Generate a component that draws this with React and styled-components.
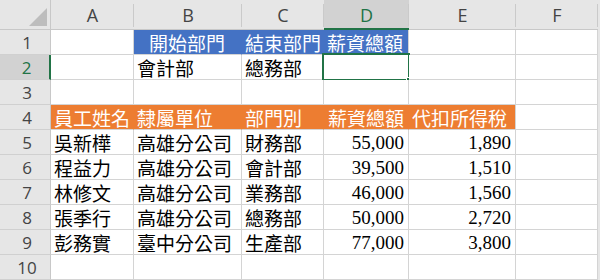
import React from 'react';
import styled, { createGlobalStyle } from 'styled-components';

const GREEN = '#217346';
const GRID = '#d4d4d4';

const GlobalStyle = createGlobalStyle`
  html, body {
    margin: 0;
    padding: 0;
    background: #ffffff;
    overflow: hidden;
  }
`;

const columns = ['A', 'B', 'C', 'D', 'E', 'F'];

const rows = [
  [null, { t: '開始部門', fill: '#4472c4', align: 'center' }, { t: '結束部門', fill: '#4472c4' }, { t: '薪資總額', fill: '#4472c4' }, null, null],
  [null, { t: '會計部' }, { t: '總務部' }, { selected: true }, null, null],
  [null, null, null, null, null, null],
  [
    { t: '員工姓名', fill: '#ed7d31' },
    { t: '隸屬單位', fill: '#ed7d31' },
    { t: '部門別', fill: '#ed7d31' },
    { t: '薪資總額', fill: '#ed7d31', align: 'right' },
    { t: '代扣所得稅', fill: '#ed7d31' },
    null,
  ],
  [{ t: '吳新樺' }, { t: '高雄分公司' }, { t: '財務部' }, { t: '55,000', num: true }, { t: '1,890', num: true }, null],
  [{ t: '程益力' }, { t: '高雄分公司' }, { t: '會計部' }, { t: '39,500', num: true }, { t: '1,510', num: true }, null],
  [{ t: '林修文' }, { t: '高雄分公司' }, { t: '業務部' }, { t: '46,000', num: true }, { t: '1,560', num: true }, null],
  [{ t: '張季行' }, { t: '高雄分公司' }, { t: '總務部' }, { t: '50,000', num: true }, { t: '2,720', num: true }, null],
  [{ t: '彭務實' }, { t: '臺中分公司' }, { t: '生產部' }, { t: '77,000', num: true }, { t: '3,800', num: true }, null],
  [null, null, null, null, null, null],
];

const App = () => {
  return (
    <>
      <GlobalStyle />
      <Sheet>
        <Corner>
          <CornerTriangle />
        </Corner>
        {columns.map((c) => (
          <ColHeader key={c} active={c === 'D'}>
            {c}
          </ColHeader>
        ))}
        <Filler />
        {rows.map((row, r) => (
          <React.Fragment key={r}>
            <RowHeader active={r === 1}>{r + 1}</RowHeader>
            {row.map((cell, c) => {
              const next = row[c + 1];
              const joined = cell && cell.fill && next && next.fill === cell.fill;
              return (
                <Cell
                  key={c}
                  fill={cell && cell.fill}
                  joined={joined}
                  align={cell && (cell.align || (cell.num ? 'right' : 'left'))}
                >
                  {cell && cell.t}
                  {cell && cell.selected && (
                    <Selection>
                      <Handle />
                    </Selection>
                  )}
                </Cell>
              );
            })}
            <Filler />
          </React.Fragment>
        ))}
      </Sheet>
    </>
  );
};

const Sheet = styled.div`
  display: grid;
  grid-template-columns: 51px 83px 108px 82px 85px 107px 82px 1fr;
  grid-template-rows: 30px repeat(10, 25px);
  width: 600px;
  height: 280px;
  overflow: hidden;
`;

const Corner = styled.div`
  position: relative;
  background: #e6e6e6;
  border-right: 1px solid #c8c8c8;
  border-bottom: 1px solid #c8c8c8;
  box-sizing: border-box;
`;

const CornerTriangle = styled.div`
  position: absolute;
  right: 3px;
  bottom: 3px;
  width: 0;
  height: 0;
  border-left: 18px solid transparent;
  border-bottom: 18px solid #bdbdbd;
`;

const ColHeader = styled.div`
  position: relative;
  display: flex;
  align-items: center;
  justify-content: center;
  box-sizing: border-box;
  background: ${(p) => (p.active ? '#d2d2d2' : '#e6e6e6')};
  border-bottom: ${(p) => (p.active ? `2px solid ${GREEN}` : '1px solid #c8c8c8')};
  color: ${(p) => (p.active ? GREEN : '#444444')};
  font-family: 'Open Sans', 'Liberation Sans', sans-serif;
  font-size: 18px;
  padding-top: 1px;

  &::after {
    content: '';
    position: absolute;
    right: 0;
    top: 4px;
    bottom: 2px;
    width: 1px;
    background: #cacaca;
  }
`;

const Filler = styled.div`
  background: #e6e6e6;
`;

const RowHeader = styled.div`
  display: flex;
  align-items: center;
  justify-content: center;
  box-sizing: border-box;
  background: ${(p) => (p.active ? '#d2d2d2' : '#e6e6e6')};
  border-right: ${(p) => (p.active ? `2px solid ${GREEN}` : '1px solid #c8c8c8')};
  border-bottom: 1px solid #d0d0d0;
  color: ${(p) => (p.active ? GREEN : '#444444')};
  font-family: 'Open Sans', 'Liberation Sans', sans-serif;
  font-size: 17px;
  padding-left: 4px;
`;

const Cell = styled.div`
  position: relative;
  display: flex;
  align-items: center;
  justify-content: ${(p) =>
    p.align === 'right' ? 'flex-end' : p.align === 'center' ? 'center' : 'flex-start'};
  box-sizing: border-box;
  padding: 1px 4px 0 3px;
  background: ${(p) => p.fill || '#ffffff'};
  border-right: 1px solid ${(p) => (p.joined ? p.fill : GRID)};
  border-bottom: 1px solid ${GRID};
  color: ${(p) => (p.fill ? '#ffffff' : '#000000')};
  font-family: 'Liberation Serif', 'Noto Sans CJK TC', serif;
  font-size: 19px;
  white-space: nowrap;
`;

const Selection = styled.div`
  position: absolute;
  left: -2px;
  top: -2px;
  right: -2px;
  bottom: -2px;
  border: 2px solid ${GREEN};
  pointer-events: none;
`;

const Handle = styled.div`
  position: absolute;
  right: -5px;
  bottom: -5px;
  width: 5px;
  height: 5px;
  background: ${GREEN};
  border: 1px solid #ffffff;
`;

export default App;
